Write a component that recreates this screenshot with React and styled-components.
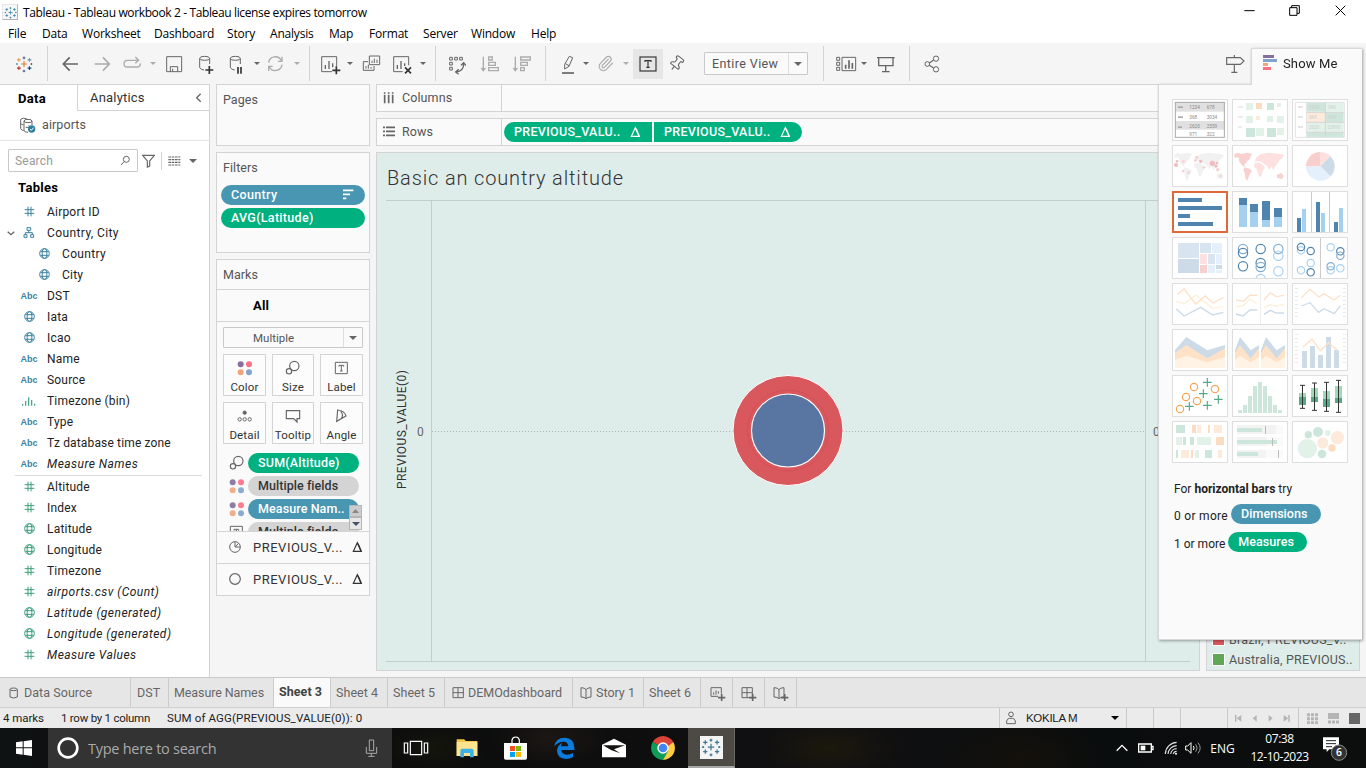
import React from "react";
import styled, { createGlobalStyle, css } from "styled-components";
import { Paperclip, Pin } from "lucide-react";

const GlobalStyle = createGlobalStyle`
  * { box-sizing: border-box; }
  html, body { margin: 0; padding: 0; overflow: hidden; }
  body { font-family: Roboto, "Liberation Sans", sans-serif; font-size: 12px; color: #222; }
  svg { display: block; flex: none; }
`;

const INK = "#666";
const BLUE = "#4996b2";
const GREEN = "#00b180";
const LINE = "#d4d4d4";

const Screen = styled.div`
  position: relative;
  width: 1366px;
  height: 768px;
  display: flex;
  flex-direction: column;
  overflow: hidden;
  background: #f5f5f5;
  white-space: nowrap;
`;

/* Drawings use three units for every pixel. */
const Pic = ({ w, h, children, ...rest }) => (
  <svg width={w} height={h} viewBox={`0 0 ${w * 3} ${h * 3}`} fill="none" {...rest}>{children}</svg>
);

/* ---------- window frame ---------- */
const TitleBar = styled.div`
  height: 24px;
  display: flex;
  align-items: center;
  padding: 0 3px 0 2px;
  background: #fff;
  color: #000;
  font: 12px "Open Sans", sans-serif;
  letter-spacing: -0.37px;
`;
const AppBadge = styled.div`
  width: 16px;
  height: 16px;
  display: flex;
  align-items: center;
  justify-content: center;
  background: #f6f6f6;
  border: 1px solid #e6e6e6;
  border-right-color: #b5b5b5;
  border-bottom-color: #b5b5b5;
`;
const TitleText = styled.div`
  flex: 1;
  padding-left: 5px;
`;
const WindowButton = styled.div`
  width: 45.5px;
  display: flex;
  justify-content: center;
  padding-bottom: 4px;
`;
const MenuBar = styled.div`
  height: 19px;
  display: flex;
  align-items: center;
  background: #fff;
  color: #000;
  font: 12px "Open Sans", sans-serif;
  letter-spacing: -0.2px;
`;
const MenuItem = styled.div`
  width: ${(p) => p.$w}px;
  padding-left: 8px;
`;

/* ---------- toolbar ---------- */
const Toolbar = styled.div`
  height: 41px;
  display: flex;
  align-items: center;
  background: #f5f5f5;
`;
const Tool = styled.div`
  width: ${(p) => p.$w}px;
  height: ${(p) => p.$h || 24}px;
  margin-left: ${(p) => p.$gap}px;
  display: flex;
  align-items: center;
  justify-content: center;
  flex: none;
  opacity: ${(p) => (p.$off ? 0.5 : 1)};
  background: ${(p) => (p.$on ? "#e6e6e6" : "transparent")};
`;
const Divider = styled.div`
  width: 1px;
  height: 35px;
  margin-left: ${(p) => p.$gap}px;
  background: ${LINE};
`;
const Combo = styled.div`
  width: ${(p) => p.$w}px;
  height: ${(p) => p.$h}px;
  margin-left: ${(p) => p.$gap || 0}px;
  display: flex;
  align-items: center;
  background: #fafafa;
  border: 1px solid #c9c9c9;
  border-radius: 1px;
  color: #555;
`;
const ComboText = styled.div`
  flex: 1;
  padding-left: ${(p) => p.$pad}px;
  font-size: ${(p) => p.$size}px;
  letter-spacing: ${(p) => p.$ls}px;
`;
const ComboArrow = styled.div`
  width: 19px;
  height: 100%;
  display: flex;
  align-items: center;
  justify-content: center;
  border-left: 1px solid #dedede;
`;
const Triangle = styled.div`
  width: 0;
  height: 0;
  border: ${(p) => p.$s || 4}px solid transparent;
  border-top-color: ${(p) => p.$c || INK};
  border-bottom: 0;
`;

const Caret = ({ gap, off }) => <Tool $w={6} $gap={gap} $off={off}><Triangle $s={3} /></Tool>;
const Icon = ({ w, gap, off, children }) => (
  <Tool $w={w} $gap={gap} $off={off}>
    <Pic w={w} h={24} stroke={INK} strokeWidth="3">{children}</Pic>
  </Tool>
);
const Cylinder = ({ x }) => (
  <>
    <ellipse cx={x} cy="19" rx="15" ry="6" />
    <path d={`M${x - 15} 19V47q4 6 13 7M${x + 15} 19V36`} />
  </>
);
const plusPath = (x, y, r) => `M${x - r} ${y}H${x + r}M${x} ${y - r}V${y + r}`;

const LOGO = [
  [25, 34, 9, "#e8762c"], [9, 21, 6, "#e8a15b"], [42, 21, 6, "#7199a6"],
  [9, 47, 6, "#c0392b"], [42, 47, 6, "#1f457e"], [25, 15, 4, "#5b6591"],
  [25, 56, 4, "#5b6591"], [3, 34, 3, "#5c9bb5"], [48, 34, 3, "#5b6591"],
];
const ProductMark = ({ size, tint }) => (
  <svg width={size} height={size} viewBox="-2 6 54 56" fill="none" strokeWidth="3.5">
    {LOGO.map(([x, y, r, c]) => <path key={`${x}-${y}`} d={plusPath(x, y, r)} stroke={tint || c} />)}
  </svg>
);

const TiltedPin = styled(Pin)`
  transform: rotate(38deg);
`;

const MainToolbar = () => (
  <Toolbar>
    <Tool $w={18} $gap={15}><ProductMark size={18} /></Tool>
    <Divider $gap={14} />
    <Icon w={18} gap={13}><path d="M7 36H51M26 16L7 36L26 56" strokeWidth="5" /></Icon>
    <Icon w={18} gap={14} off><path d="M5 36H49M30 16L49 36L30 56" strokeWidth="5" /></Icon>
    <Icon w={20} gap={11} off><path d="M50 25H16a10 10 0 0 0 0 20H48q8-2 7-11M40 15l10 10l-10 9" strokeWidth="4" /></Icon>
    <Caret gap={8} off />
    <Icon w={18} gap={9}><path d="M5 14H50V59H5ZM16 59V44H38V59M23 50V58" /></Icon>
    <Icon w={16} gap={15}><Cylinder x={20} /><path d={plusPath(34, 54, 12)} stroke="#333" strokeWidth="5" /></Icon>
    <Icon w={15} gap={15}><Cylinder x={19} /><path d="M27 45V65M36 45V65" stroke="#333" strokeWidth="5" /></Icon>
    <Caret gap={10} />
    <Icon w={19} gap={6} off><path d="M8 32A20 20 0 0 1 46 26M48 38A20 20 0 0 1 10 44M48 14V28H36M8 57V43H20" strokeWidth="4" /></Icon>
    <Caret gap={9} off />
    <Divider $gap={9} />
    <Icon w={21} gap={10}>
      <path d="M36 59H5V14H50V42" /><path d="M16 39V51M27 27V51M38 34V46" strokeWidth="4" />
      <path d={plusPath(49, 55, 12)} stroke="#333" strokeWidth="5" />
    </Icon>
    <Caret gap={6} />
    <Icon w={19} gap={9}><path d="M22 12H53V38H22ZM18 29H4V55H36V42M30 26V33M37 20V33M45 23V33M12 42V50M19 38V50M27 45V50" /></Icon>
    <Icon w={21} gap={11}>
      <path d="M32 59H5V14H50V40" /><path d="M16 39V51M27 27V51M38 34V42" strokeWidth="4" />
      <path d="M39 46L57 64M57 46L39 64" stroke="#333" strokeWidth="5" />
    </Icon>
    <Caret gap={7} />
    <Divider $gap={9} />
    <Icon w={18} gap={12}>
      <path d="M5 16h8v8h-8zM20 16h8v8h-8zM35 16h8v8h-8zM5 31h8v8h-8zM5 46h8v8h-8z" />
      <path d="M47 34Q48 57 24 60M39 40l8-8l7 9M32 52l-9 8l9 7" strokeWidth="4" />
    </Icon>
    <Icon w={20} gap={14} off><path d="M10 14V56M4 48l6 8l6-8M26 15h11v9h-11zM26 31h20v9h-20zM26 47h29v9h-29z" strokeWidth="4" /></Icon>
    <Icon w={20} gap={12} off><path d="M10 14V56M4 48l6 8l6-8M26 15h29v9h-29zM26 31h20v9h-20zM26 47h11v9h-11z" strokeWidth="4" /></Icon>
    <Divider $gap={13} />
    <Icon w={15} gap={15}><path d="M25 13L35 17L24 43L11 51L11 37ZM13 35L24 41" /><path d="M3 63H39" strokeWidth="5" /></Icon>
    <Caret gap={7} />
    <Tool $w={15} $gap={9} $off><Paperclip size={17} color={INK} strokeWidth={1.6} /></Tool>
    <Caret gap={10} off />
    <Tool $w={30} $h={30} $gap={4} $on>
      <Pic w={18} h={16}>
        <rect x="3" y="3" width="48" height="42" stroke="#333" strokeWidth="3.5" />
        <path d="M18 18V14H36V18M27 14V34M22 34H32" stroke="#333" strokeWidth="3.5" />
      </Pic>
    </Tool>
    <Tool $w={15} $gap={6}><TiltedPin size={17} color={INK} strokeWidth={1.6} /></Tool>
    <Combo $w={104} $h={23} $gap={20}>
      <ComboText $pad={7} $size={12.5} $ls={0.4}>Entire View</ComboText>
      <ComboArrow><Triangle /></ComboArrow>
    </Combo>
    <Divider $gap={15} />
    <Icon w={22} gap={11}>
      <path d="M5 16h9v9h-9zM5 31h9v9h-9zM5 46h9v9h-9zM21 16H62V56H21Z" />
      <path d="M32 38V50M42 25V50M52 33V50" strokeWidth="5" />
    </Icon>
    <Caret gap={4} />
    <Icon w={20} gap={9}><path d="M3 17H56M8 17V41H51V17M29 41V59M18 59H41" strokeWidth="4" /></Icon>
    <Divider $gap={13} />
    <Icon w={16} gap={14}><circle cx="10" cy="36" r="7" /><circle cx="36" cy="20" r="8" /><circle cx="36" cy="52" r="8" /><path d="M16 33L29 24M16 40L29 48" strokeWidth="3.5" /></Icon>
    <Icon w={20} gap={285}><path d="M5 17H46L57 27L46 37H5ZM28 9V17M28 37V61M19 61H37" strokeWidth="3.5" /></Icon>
  </Toolbar>
);

/* ---------- data pane ---------- */
const Body = styled.div`
  height: 593px;
  display: flex;
`;
const DataPane = styled.div`
  width: 210px;
  background: #fff;
  border-right: 1px solid ${LINE};
  border-top: 1px solid ${LINE};
`;
const PaneTabs = styled.div`
  display: flex;
  height: 26px;
`;
const PaneTab = styled.div`
  width: ${(p) => p.$w}px;
  padding-left: ${(p) => p.$pad}px;
  display: flex;
  align-items: center;
  font-size: 13px;
  letter-spacing: ${(p) => (p.$active ? 0.3 : 0.2)}px;
  font-weight: ${(p) => (p.$active ? 700 : 400)};
  color: ${(p) => (p.$active ? "#000" : "#333")};
  ${(p) => !p.$active && css`
    border-left: 1px solid ${LINE};
    border-bottom: 1px solid ${LINE};
    justify-content: space-between;
    padding-right: 7px;
  `}
`;
const Source = styled.div`
  height: 30px;
  display: flex;
  align-items: center;
  gap: 5px;
  padding: 0 0 2px 19px;
  color: #555;
  font-size: 12.5px;
  letter-spacing: 0.1px;
  border-bottom: 1px solid #e6e6e6;
`;
const SearchRow = styled.div`
  display: flex;
  align-items: center;
  padding: 8px 0 0 8px;
`;
const SearchBox = styled.div`
  width: 130px;
  height: 23px;
  display: flex;
  align-items: center;
  justify-content: space-between;
  padding: 0 6px;
  border: 1px solid #c9c9c9;
  border-radius: 1px;
  color: #999;
  letter-spacing: 0.2px;
`;
const SearchTools = styled.div`
  height: 18px;
  display: flex;
  align-items: center;
  margin-left: ${(p) => p.$gap}px;
  padding-left: ${(p) => p.$pad || 0}px;
  gap: 8px;
  border-left: ${(p) => (p.$pad ? `1px solid ${LINE}` : "0")};
`;
const TablesHeading = styled.div`
  height: 29px;
  padding: 8px 0 0 18px;
  font-size: 13px;
  letter-spacing: 0.3px;
  font-weight: 700;
  color: #000;
`;
const Field = styled.div`
  height: 21px;
  display: flex;
  align-items: center;
  padding-left: ${(p) => 18 + (p.$deep ? 15 : 0) - (p.$open ? 12 : 0)}px;
  letter-spacing: ${(p) => p.$ls || 0.1}px;
  font-size: 12px;
  font-style: ${(p) => (p.$italic ? "italic" : "normal")};
`;
const FieldIcon = styled.span`
  width: 21px;
  margin-right: 8px;
  padding-left: 1px;
  display: flex;
  justify-content: center;
  font: 700 9px "Liberation Sans", sans-serif;
  letter-spacing: 0;
  color: #3d83a0;
  flex: none;
`;
const Expander = styled.span`
  width: 12px;
  display: flex;
`;
const FieldRule = styled.div`
  height: 1px;
  margin: 1px 7px 0 15px;
  background: #dcdcdc;
`;

const Glyph = ({ kind, color }) => {
  if (kind === "abc") return "Abc";
  if (kind === "hash") return <Pic w={11} h={11} stroke={color} strokeWidth="3"><path d="M12 2V31M21 2V31M2 11H31M2 22H31" /></Pic>;
  if (kind === "globe") return (
    <Pic w={11} h={11} stroke={color} strokeWidth="3"><circle cx="16.5" cy="16.5" r="14.5" /><ellipse cx="16.5" cy="16.5" rx="7" ry="14.5" /><path d="M4 11H29M4 22H29" /></Pic>
  );
  if (kind === "tree") return <Pic w={12} h={11} stroke={color} strokeWidth="3"><path d="M12 2h11v8h-11zM17 10V17M7 23V17H28V23M3 23h9v8h-9zM23 23h9v8h-9z" /></Pic>;
  return <Pic w={14} h={10} stroke={color} strokeWidth="3.5"><path d="M2 24V29M11 15V29M20 4V29M29 12V29M38 23V29" /></Pic>;
};

const DIM = "#3d83a0";
const MEA = "#3a9f79";
const DIMENSIONS = [
  { k: "hash", t: "Airport ID" },
  { k: "tree", t: "Country, City", open: true, ls: 0.4 },
  { k: "globe", t: "Country", deep: true, ls: 0.35 },
  { k: "globe", t: "City", deep: true },
  { k: "abc", t: "DST" },
  { k: "globe", t: "Iata" },
  { k: "globe", t: "Icao" },
  { k: "abc", t: "Name" },
  { k: "abc", t: "Source" },
  { k: "hist", t: "Timezone (bin)", c: MEA },
  { k: "abc", t: "Type" },
  { k: "abc", t: "Tz database time zone", ls: 0.15 },
  { k: "abc", t: "Measure Names", i: true },
];
const MEASURES = [
  { k: "hash", t: "Altitude" },
  { k: "hash", t: "Index" },
  { k: "globe", t: "Latitude" },
  { k: "globe", t: "Longitude" },
  { k: "hash", t: "Timezone" },
  { k: "hash", t: "airports.csv (Count)", i: true },
  { k: "globe", t: "Latitude (generated)", i: true },
  { k: "globe", t: "Longitude (generated)", i: true },
  { k: "hash", t: "Measure Values", i: true },
];
const FieldRow = ({ f, color }) => (
  <Field $deep={f.deep} $open={f.open} $italic={f.i} $ls={f.ls || (f.i ? 0.47 : 0.2)}>
    {f.open && <Expander><Pic w={10} h={8} stroke={INK} strokeWidth="4"><path d="M5 8L15 17L25 8" /></Pic></Expander>}
    <FieldIcon><Glyph kind={f.k} color={f.c || color} /></FieldIcon>
    {f.t}
  </Field>
);

const DataSidebar = () => (
  <DataPane>
    <PaneTabs>
      <PaneTab $w={77} $pad={18} $active>Data</PaneTab>
      <PaneTab $w={132} $pad={12}>Analytics<Pic w={7} h={12} stroke={INK} strokeWidth="4"><path d="M17 5L5 17L17 29" /></Pic></PaneTab>
    </PaneTabs>
    <Source>
      <Pic w={18} h={18} stroke={INK} strokeWidth="3">
        <path d="M24 9Q12 3 5 10V38q3 5 9 6M5 22q3 4 8 5" />
        <ellipse cx="27" cy="15" rx="12" ry="5" /><path d="M15 15V44q4 5 12 5M39 15V27M20 34h14m-5-6l6 6l-6 6" />
        <circle cx="38" cy="39" r="11" fill="#2f7f9f" stroke="none" /><path d="M33 39l4 4l7-8" stroke="#fff" />
      </Pic>
      airports
    </Source>
    <SearchRow>
      <SearchBox>Search<Pic w={11} h={11} stroke={INK} strokeWidth="3"><circle cx="19" cy="13" r="9" /><path d="M12 20L3 30" /></Pic></SearchBox>
      <SearchTools $gap={4}><Pic w={13} h={14} stroke={INK} strokeWidth="3.5"><path d="M2 4H37L23 21V36L16 39V21Z" /></Pic></SearchTools>
      <SearchTools $gap={6} $pad={6}>
        <Pic w={13} h={10} stroke={INK} strokeWidth="3.5"><path d="M1 3H37M1 11H37M1 19H37M1 27H37" strokeDasharray="8 2" /></Pic>
        <Triangle />
      </SearchTools>
    </SearchRow>
    <TablesHeading>Tables</TablesHeading>
    {DIMENSIONS.map((f) => <FieldRow key={f.t} f={f} color={DIM} />)}
    <FieldRule />
    {MEASURES.map((f) => <FieldRow key={f.t} f={f} color={MEA} />)}
  </DataPane>
);

/* ---------- cards ---------- */
const CardColumn = styled.div`
  width: 154px;
  margin-left: 6px;
  display: flex;
  flex-direction: column;
  gap: 6px;
`;
const Card = styled.div`
  height: ${(p) => p.$h}px;
  border: 1px solid ${LINE};
  background: #fafafa;
`;
const CardTitle = styled.div`
  height: ${(p) => p.$h}px;
  padding: 0 0 ${(p) => p.$lift || 0}px 6px;
  display: flex;
  align-items: center;
  color: #555;
  letter-spacing: 0.05px;
  font-size: 12.5px;
`;
const Pill = styled.div`
  width: ${(p) => p.$w}px;
  height: 20px;
  display: flex;
  align-items: center;
  justify-content: space-between;
  padding: 0 11px 1px 10px;
  border-radius: ${(p) => p.$radius || "10px"};
  background: ${(p) => p.$bg};
  color: ${(p) => p.$fg || "#fff"};
  font-size: 12.5px;
  font-weight: 500;
  letter-spacing: ${(p) => p.$ls || 0.2}px;
`;
const PillStack = styled.div`
  display: flex;
  flex-direction: column;
  gap: 3px;
  padding-left: 4px;
`;
const MarkTab = styled.div`
  height: ${(p) => p.$h}px;
  display: flex;
  align-items: center;
  padding-left: ${(p) => p.$pad}px;
  padding-right: 6px;
  padding-bottom: 1px;
  border-top: 1px solid ${LINE};
  color: ${(p) => (p.$strong ? "#000" : "#333")};
  font-weight: ${(p) => (p.$strong ? 700 : 400)};
  font-size: 13px;
  letter-spacing: ${(p) => (p.$strong ? 0.2 : 0.5)}px;
`;
const MarkName = styled.span`
  flex: 1;
  padding-left: 12px;
`;
const MarkBody = styled.div`
  height: 210px;
  border-top: 1px solid ${LINE};
  padding: 5px 6px 0;
  overflow: hidden;
  position: relative;
`;
const MarkGrid = styled.div`
  display: grid;
  grid-template-columns: 43px 42px 43px;
  gap: 6px;
  margin-top: 6px;
`;
const MarkButton = styled.div`
  height: 42px;
  border: 1px solid ${LINE};
  background: #fcfcfc;
  display: flex;
  flex-direction: column;
  align-items: center;
  padding-top: 5px;
  gap: 4px;
  color: #333;
  font-size: 11.5px;
  letter-spacing: 0.15px;
`;
const MarkPills = styled.div`
  display: flex;
  flex-direction: column;
  gap: 3px;
  margin-top: 9px;
`;
const MarkPillRow = styled.div`
  display: flex;
  align-items: center;
  gap: 3px;
  padding-left: 6px;
`;
const Scroller = styled.div`
  position: absolute;
  right: 7px;
  bottom: 1px;
  width: 13px;
  display: flex;
  flex-direction: column;
`;
const ScrollButton = styled.div`
  height: ${(p) => (p.$off ? 12 : 13)}px;
  display: flex;
  align-items: center;
  justify-content: center;
  border: 1px solid #b5b5b5;
  background: ${(p) => (p.$off ? "#ccc" : "#e6e6e6")};
`;

const Dots = ({ faded }) => (
  <Pic w={16} h={16} opacity={faded ? 0.9 : 1}>
    <circle cx="11" cy="13" r="9" fill="#85709e" /><circle cx="36" cy="13" r="9" fill="#fb7084" />
    <circle cx="11" cy="37" r="9" fill="#f2a57c" /><circle cx="36" cy="37" r="9" fill="#80a4cc" />
  </Pic>
);
const Bubbles = () => <Pic w={16} h={16} stroke={INK} strokeWidth="3.5"><circle cx="28" cy="18" r="14" /><circle cx="12" cy="34" r="8" fill="#fafafa" /></Pic>;
const LabelBox = () => <Pic w={16} h={16} stroke={INK} strokeWidth="3"><path d="M4 7H40V41H4ZM15 20V16H29V20M22 16V33M18 33H26" /></Pic>;
const Delta = ({ c = "#fff" }) => <Pic w={11} h={12} stroke={c} strokeWidth="3.5"><path d="M16 5L28 31H4Z" /><path d="M18 8L27 30" strokeWidth="4.5" /></Pic>;

const MARKS = [
  ["Color", <Dots key="c" />],
  ["Size", <Bubbles key="s" />],
  ["Label", <LabelBox key="l" />],
  ["Detail", <Pic key="d" w={16} h={16} stroke={INK} strokeWidth="3"><circle cx="23" cy="14" r="5" fill={INK} /><circle cx="8" cy="34" r="5" /><circle cx="23" cy="34" r="5" /><circle cx="38" cy="34" r="5" /></Pic>],
  ["Tooltip", <Pic key="t" w={16} h={16} stroke={INK} strokeWidth="3.5"><path d="M4 8H44V32H36V42L26 32H4Z" /></Pic>],
  ["Angle", <Pic key="a" w={16} h={16} stroke={INK} strokeWidth="3.5"><path d="M11 6L8 40L36 24Q32 8 11 6ZM20 10Q30 20 22 32" /></Pic>],
];

const Cards = () => (
  <CardColumn>
    <Card $h={62}><CardTitle $h={30} $lift={2}>Pages</CardTitle></Card>
    <Card $h={101}>
      <CardTitle $h={32} $lift={3}>Filters</CardTitle>
      <PillStack>
        <Pill $w={144} $bg={BLUE} $ls={0.35}>Country<Pic w={11} h={11} stroke="#fff" strokeWidth="5"><path d="M0 4H31M0 16H21M0 28H10" /></Pic></Pill>
        <Pill $w={144} $bg={GREEN} $ls={0.3}>AVG(Latitude)</Pill>
      </PillStack>
    </Card>
    <Card $h={337}>
      <CardTitle $h={29}>Marks</CardTitle>
      <MarkTab $h={32} $pad={36} $strong>All</MarkTab>
      <MarkBody>
        <Combo $w={140} $h={21}>
          <ComboText $pad={29} $size={11.5} $ls={0}>Multiple</ComboText>
          <ComboArrow><Triangle /></ComboArrow>
        </Combo>
        <MarkGrid>
          {MARKS.map(([name, icon]) => <MarkButton key={name}>{icon}{name}</MarkButton>)}
        </MarkGrid>
        <MarkPills>
          <MarkPillRow><Bubbles /><Pill $w={111} $bg={GREEN}>SUM(Altitude)</Pill></MarkPillRow>
          <MarkPillRow><Dots faded /><Pill $w={111} $bg="#d4d4d4" $fg="#333" $ls={0.05}>Multiple fields</Pill></MarkPillRow>
          <MarkPillRow><Dots faded /><Pill $w={111} $bg={BLUE} $ls={0.1}>Measure Nam..</Pill></MarkPillRow>
          <MarkPillRow><LabelBox /><Pill $w={111} $bg="#d4d4d4" $fg="#333" $ls={0.05}>Multiple fields</Pill></MarkPillRow>
        </MarkPills>
        <Scroller>
          <ScrollButton $off><Pic w={7} h={4}><path d="M10.500 0L21 12H0Z" fill="#888" /></Pic></ScrollButton>
          <ScrollButton><Triangle $c="#445066" /></ScrollButton>
        </Scroller>
      </MarkBody>
      <MarkTab $h={32} $pad={12}>
        <Pic w={12} h={12} stroke={INK} strokeWidth="3"><circle cx="18" cy="18" r="16" /><path d="M18 3V18H33M18 18L29 7" /></Pic>
        <MarkName>PREVIOUS_V...</MarkName><Delta c="#333" />
      </MarkTab>
      <MarkTab $h={32} $pad={12}>
        <Pic w={12} h={12} stroke={INK} strokeWidth="3.5"><circle cx="18" cy="18" r="16" /></Pic>
        <MarkName>PREVIOUS_V...</MarkName><Delta c="#333" />
      </MarkTab>
    </Card>
  </CardColumn>
);

/* ---------- worksheet ---------- */
const Work = styled.div`
  width: 824px;
  margin-left: 6px;
  display: flex;
  flex-direction: column;
  gap: 6px;
`;
const Shelf = styled.div`
  height: 28px;
  display: flex;
  align-items: center;
  border: 1px solid ${LINE};
  background: #fafafa;
`;
const ShelfName = styled.div`
  width: 125px;
  height: 100%;
  display: flex;
  align-items: center;
  gap: 7px;
  padding: 0 0 1px 6px;
  border-right: 1px solid ${LINE};
  color: #555;
  font-size: 12.5px;
  letter-spacing: 0.1px;
`;
const ShelfPills = styled.div`
  display: flex;
  gap: 2px;
  padding-left: 2px;
`;
const View = styled.div`
  height: 519px;
  background: #dfedea;
  border: 1px solid ${LINE};
`;
const ViewTitle = styled.div`
  height: 48px;
  margin: 0 9px;
  padding: 13px 0 0 1px;
  border-bottom: 1px solid #c3cdcb;
  font-size: 20px;
  font-weight: 300;
  letter-spacing: 0.85px;
  color: #333;
`;
const LegendColumn = styled.div`
  width: 154px;
  margin-left: 6px;
  padding-bottom: 6px;
  display: flex;
  flex-direction: column;
  justify-content: flex-end;
`;
const Legend = styled.div`
  height: 120px;
  padding: 0 0 1px 5px;
  display: flex;
  flex-direction: column;
  justify-content: flex-end;
  background: #dfedea;
  border: 1px solid ${LINE};
`;
const LegendItem = styled.div`
  height: 20px;
  display: flex;
  align-items: center;
  gap: 4px;
  color: #555;
  letter-spacing: 0.2px;
  font-size: 12.5px;
`;
const Swatch = styled.span`
  width: 13px;
  height: 13px;
  border: 1px solid #fff;
  background: ${(p) => p.$c};
`;

const Chart = () => (
  <svg width="822" height="468" viewBox="377 201 822 468">
    <g stroke="#c3cdcb" fill="none">
      <path d="M431.500 201V661M1145.500 201V661M386 661.500H1190" />
      <path d="M432 431.500H1145" stroke="#a9b5b3" strokeDasharray="1 2" />
    </g>
    <circle cx="788" cy="430.500" r="55" fill="#d9585d" stroke="#fff" />
    <circle cx="788" cy="430.500" r="40.500" fill="none" stroke="#d35156" strokeWidth="1" />
    <circle cx="788" cy="430.500" r="36.500" fill="#5876a1" stroke="#fff" strokeWidth="1.2" />
    <g fontFamily="Roboto, sans-serif" fontSize="12" fill="#666">
      <text x="417" y="436">0</text>
      <text x="1153" y="436">0</text>
      <text transform="translate(406 489) rotate(-90)" fill="#333" textLength="119">PREVIOUS_VALUE(0)</text>
    </g>
  </svg>
);

const Worksheet = () => (
  <>
    <Work>
      <Shelf><ShelfName><Pic w={12} h={12} stroke={INK} strokeWidth="5"><path d="M5 1V5M17 1V5M29 1V5M5 8V34M17 8V34M29 8V34" /></Pic>Columns</ShelfName></Shelf>
      <Shelf>
        <ShelfName><Pic w={12} h={11} stroke={INK} strokeWidth="5"><path d="M0 4H6M9 4H36M0 16H6M9 16H36M0 28H6M9 28H36" /></Pic>Rows</ShelfName>
        <ShelfPills>
          <Pill $w={148} $bg={GREEN} $ls={0.3} $radius="10px 0 0 10px">PREVIOUS_VALU..<Delta /></Pill>
          <Pill $w={148} $bg={GREEN} $ls={0.3} $radius="0 10px 10px 0">PREVIOUS_VALU..<Delta /></Pill>
        </ShelfPills>
      </Shelf>
      <View>
        <ViewTitle>Basic an country altitude</ViewTitle>
        <Chart />
      </View>
    </Work>
    <LegendColumn>
      <Legend>
        <LegendItem><Swatch $c="#d9585d" />Brazil, PREVIOUS_V..</LegendItem>
        <LegendItem><Swatch $c="#60a755" />Australia, PREVIOUS..</LegendItem>
      </Legend>
    </LegendColumn>
  </>
);

/* ---------- Show Me ---------- */
const ShowMe = styled.div`
  position: absolute;
  left: 1158px;
  top: 48px;
  width: 204px;
  filter: drop-shadow(1px 1px 1.5px rgba(0, 0, 0, 0.35));
`;
const ShowMeTab = styled.div`
  position: relative;
  height: 37px;
  width: 111px;
  margin: 0 0 -1px auto;
  display: flex;
  align-items: center;
  gap: 5px;
  padding: 0 0 8px 11px;
  background: #fafafa;
  border: 1px solid #d9d9d9;
  border-bottom: 0;
  border-right: 0;
  color: #222;
  font-size: 13px;
  letter-spacing: 0.15px;
`;
const ShowMeBody = styled.div`
  height: 556px;
  padding: 14px 13px;
  background: #fafafa;
  border: 1px solid #d9d9d9;
  border-right: 0;
`;
const ThumbGrid = styled.div`
  display: grid;
  grid-template-columns: repeat(3, 56px);
  gap: 4px;
`;
const Thumb = styled.div`
  width: 56px;
  height: 42px;
  background: #fff;
  outline: ${(p) => (p.$on ? "2px solid #dc6a38" : "1px solid #dedede")};
  outline-offset: ${(p) => (p.$on ? -2 : -1)}px;
`;
const HintTitle = styled.div`
  height: 26px;
  margin-top: 13px;
  padding-left: 2px;
  display: flex;
  align-items: center;
`;
const Hint = styled.div`
  display: flex;
  align-items: center;
  gap: 3px;
  height: 28px;
  padding-left: 2px;
  letter-spacing: ${(p) => p.$ls}px;
  color: #222;
`;
const HintPill = styled.span`
  width: ${(p) => p.$w}px;
  height: 20px;
  margin-bottom: 4px;
  border-radius: 10px;
  background: ${(p) => p.$bg};
  color: #fff;
  display: flex;
  align-items: center;
  padding: 0 0 1px 10px;
  font-size: 12.5px;
  letter-spacing: 0.05px;
  font-weight: 500;
`;

const Rects = ({ list }) => list.map(([x, y, w, h, f], i) => <rect key={i} x={x} y={y} width={w} height={h} fill={f} />);
const Rings = ({ list, r }) => list.map(([x, y, c], i) => <circle key={i} cx={x} cy={y} r={r} stroke={c} strokeWidth="3.5" />);
const Lines = ({ list }) => list.map(([pts, c], i) => <polyline key={i} points={pts} stroke={c} strokeWidth="4" />);
const Continents = ({ a, b }) => (
  <g>
    <path fill={a} d="M7 27L18 24L28 27L44 23L60 26L57 34L52 36L56 40L46 48L40 57L36 58L41 68L30 61L22 50L20 37L7 38ZM38 67L52 71L60 78L52 90L46 107L41 101L38 84L34 74ZM134 90L148 84L155 93L150 102L136 99Z" />
    <path fill={b} d="M68 54L84 53L94 62L99 68L92 78L88 92L82 96L78 84L74 72L66 66ZM68 50L72 38L84 28L108 23L140 26L157 30L150 40L143 44L136 57L128 66L124 77L118 63L112 75L105 62L97 58L90 52L80 48Z" />
  </g>
);
const dk = "#4e84ae", lt = "#a6d0f0", md = "#7fadd3";
const g1 = "#e2f2e9", g2 = "#cde6db", o1 = "#fdeadb", o2 = "#fbdcc0";
const fo = "#fde2c8", fy = "#fdf0d8", fb = "#cddbe8";
const area = (pts, dx) => `M${pts.map(([x, y]) => `${x + dx} ${y}`).join("L")}L${pts[pts.length - 1][0] + dx} 117L${pts[0][0] + dx} 117Z`;
const HALF = [[[9, 63], [24, 24], [56, 64], [81, 48]], [[9, 72], [24, 48], [56, 88], [81, 58]], [[9, 93], [24, 80], [56, 100], [81, 84]]];

const THUMBS = [
  <>
    <Rects list={[[9, 10, 150, 28, "#e0e0e0"], [9, 66, 150, 26, "#e0e0e0"], [18, 22, 15, 5, "#aaa"], [18, 52, 15, 5, "#aaa"], [18, 82, 12, 5, "#aaa"]]} />
    <rect x="10" y="10" width="147" height="105" stroke="#a9a9a9" strokeWidth="3" />
    <g fill="#888" fontSize="14"><text x="52" y="31">1234</text><text x="104" y="31">678</text><text x="52" y="59">368</text><text x="104" y="59">3034</text><text x="52" y="86">2620</text><text x="104" y="86">2559</text><text x="52" y="110">971</text><text x="104" y="110">322</text></g>
  </>,
  <Rects list={[[18, 21, 15, 6, "#ececec"], [18, 51, 15, 6, "#ececec"], [18, 81, 12, 6, "#ececec"], [42, 12, 21, 21, g1], [72, 12, 18, 18, o2], [105, 12, 21, 21, g2], [135, 12, 12, 12, g1], [42, 51, 21, 21, g1], [72, 51, 12, 12, o1], [105, 51, 18, 18, g1], [135, 51, 21, 21, g1], [42, 87, 27, 27, g2], [72, 87, 24, 24, g1], [105, 87, 27, 27, g2], [135, 87, 21, 21, g1]]} />,
  <>
    <Rects list={[[18, 21, 15, 6, "#e6e6e6"], [18, 51, 15, 6, "#e6e6e6"], [18, 81, 15, 6, "#e6e6e6"], [45, 10, 54, 28, g2], [101, 10, 54, 28, g1], [45, 42, 54, 27, o1], [101, 42, 54, 27, g2], [45, 72, 54, 27, g1], [101, 72, 54, 27, g1], [45, 102, 54, 13, g2], [101, 102, 54, 13, g2]]} />
    <path d="M10 10H157V115H10ZM43 10V115" stroke="#e3e3e3" strokeWidth="3" />
    <path d="M43 40H157M43 70H157M43 100H157M100 10V115" stroke="#d2d2d2" strokeWidth="3" />
    <g fill="#cfcfcf" fontSize="14"><text x="50" y="31">1234</text><text x="108" y="31">546</text><text x="50" y="60">368</text><text x="108" y="60">340</text><text x="50" y="90">2620</text><text x="106" y="90">53890</text></g>
  </>,
  <><Continents a="#f1f1f1" b="#f1f1f1" />
    {[[12, 60, 6, "#f0bcc0"], [15, 49, 4, "#f0bcc0"], [34, 49, 5, "#fad8d8"], [74, 37, 5, "#f6cfd0"], [70, 46, 4, "#f6cfd0"], [86, 49, 5, "#f0bcc0"], [121, 55, 8, "#f0bcc0"], [135, 54, 4, "#f0bcc0"], [132, 63, 5, "#f0bcc0"], [137, 74, 5, "#f6cfd0"], [33, 78, 4, "#f6cfd0"], [50, 83, 5, "#fad8d8"], [96, 67, 4, "#f6cfd0"], [146, 93, 4, "#f6cfd0"]].map(([x, y, r, c], i) => <circle key={i} cx={x} cy={y} r={r} fill={c} />)}</>,
  <Continents a="#f8d0ce" b="#fee0e0" />,
  <><path d="M85 64V21A43 43 0 0 1 115.400 33.600Z" fill="#fee0e0" /><path d="M85 64L115.400 33.600A43 43 0 0 1 115.400 94.400Z" fill={fb} /><path d="M85 64L115.400 94.400A43 43 0 0 1 42 64Z" fill="#e4f0fb" /><path d="M85 64H42A43 43 0 0 1 85 21Z" fill="#f7cfcd" /></>,
  <Rects list={[[18, 21, 72, 12, dk], [18, 45, 132, 12, dk], [18, 69, 36, 12, dk], [18, 93, 105, 12, dk]]} />,
  <Rects list={[[21, 21, 24, 21, dk], [21, 42, 24, 66, lt], [54, 39, 24, 24, dk], [54, 63, 24, 45, lt], [90, 30, 24, 57, dk], [90, 87, 24, 21, lt], [126, 51, 24, 27, dk], [126, 78, 24, 30, lt]]} />,
  <Rects list={[[57, 3, 3, 120, "#ccc"], [111, 3, 3, 120, "#ccc"], [15, 81, 12, 42, dk], [30, 54, 12, 69, lt], [72, 33, 12, 90, dk], [87, 66, 12, 57, lt], [126, 93, 12, 30, dk], [141, 51, 12, 72, lt]]} />,
  <Rects list={[[18, 18, 63, 45, "#d8e5f1"], [18, 66, 63, 42, fb], [84, 18, 33, 30, "#d8e5f1"], [120, 18, 30, 30, "#e4f0fb"], [84, 51, 21, 30, "#fee0e0"], [108, 51, 21, 30, "#d8e5f1"], [132, 51, 18, 30, "#e4f0fb"], [84, 84, 21, 24, "#f7cfcd"], [108, 84, 21, 24, "#e4f0fb"], [132, 84, 18, 12, fb], [132, 99, 18, 9, "#e4f0fb"]]} />,
  <Rings r={14} list={[[33, 36, md], [33, 48, dk], [33, 88, dk], [86, 36, dk], [86, 78, dk], [86, 90, md], [86, 126, lt], [139, 56, lt], [139, 36, md], [139, 103, lt]]} />,
  <><Rects list={[[84, 3, 3, 120, "#ccc"]]} /><Rings r={11} list={[[27, 40, lt], [27, 30, dk], [56, 42, dk], [56, 78, lt], [27, 100, lt], [56, 106, dk], [116, 31, lt], [145, 43, dk], [145, 56, md], [116, 100, lt], [116, 88, md], [145, 94, lt]]} /></>,
  <Lines list={[["13,55 36,62 72,36 122,76 154,70", fy], ["16,35 36,17 71,63 100,39 122,60 154,44", fo], ["13,77 36,99 86,73 122,96 154,88", fb]]} />,
  <><Rects list={[[84, 3, 3, 120, "#eee"]]} /><Lines list={[["12,72 33,68 54,48 74,62", fy], ["12,51 35,55 54,36 76,37", fo], ["12,93 33,99 54,81 76,81", fb], ["96,75 115,65 132,70 156,64", fy], ["96,51 115,29 132,41 156,37", fo], ["96,94 115,82 132,90 156,90", fb]]} /></>,
  <><path d="M13 15V108M157 15V108" stroke="#e9e9e9" strokeWidth="9" strokeDasharray="3 9" /><Lines list={[["28,44 54,19 81,42 96,32 126,51 145,37", fo], ["28,69 54,59 80,88 96,77 127,92 145,68", fb]]} /></>,
  <><path d="M9 63L43 24L106 64L159 48V117H9Z" fill={fb} /><path d="M9 72L43 48L106 88L159 58V117H9Z" fill={fo} /><path d="M9 93L43 80L106 100L159 84V117H9Z" fill="#fef3e4" /></>,
  <>{[0, 78].map((dx) => HALF.map((pts, i) => <path key={`${dx}-${i}`} d={area(pts, dx)} fill={[fb, fo, "#fef3e4"][i]} />))}<rect x="81" y="20" width="6" height="98" fill="#fff" /></>,
  <><path d="M13 15V108M157 15V108" stroke="#e9e9e9" strokeWidth="9" strokeDasharray="3 9" /><Rects list={[[30, 66, 15, 51, fb], [54, 51, 15, 66, fb], [78, 78, 15, 39, fb], [102, 24, 15, 93, fb], [126, 63, 15, 54, fb]]} /><Lines list={[["33,54 60,30 85,66 109,41 139,66", fo]]} /></>,
  <><Rings r={11} list={[[66, 36, "#f2a65a"], [129, 42, "#f2a65a"], [42, 66, "#f2a65a"], [75, 78, "#f2a65a"], [24, 102, "#f2a65a"]]} />{[[106, 22], [94, 56], [139, 73], [52, 94], [106, 91]].map(([x, y]) => <path key={`${x}-${y}`} d={plusPath(x, y, 13)} stroke="#55aa88" strokeWidth="3.500" />)}</>,
  <Rects list={[105, 90, 63, 33, 21, 33, 63, 90, 105].map((y, i) => [18 + i * 15, y, 12, 114 - y, g2])} />,
  <>{[[21, 54, 66, 90, 31, 100], [57, 39, 66, 81, 24, 106], [93, 48, 72, 96, 22, 109], [129, 33, 69, 84, 16, 112]].map(([x, a, b, c, t, u]) => <g key={x}><rect x={x} y={a} width="21" height={b - a} fill="#9fd9b8" /><rect x={x} y={b} width="21" height={c - b} fill="#57aa87" /><path d={`M${x + 10.5} ${t}V${u}M${x + 3} ${t}h15M${x + 3} ${u}h15`} stroke="#333" strokeWidth="3" /></g>)}</>,
  <Rects list={[[12, 12, 27, 24, g2], [60, 12, 12, 24, o2], [75, 12, 12, 24, o1], [108, 12, 6, 24, o2], [126, 12, 24, 24, o1], [12, 48, 18, 24, g1], [33, 48, 9, 24, g2], [54, 48, 12, 24, g2], [75, 48, 42, 24, g1], [132, 48, 24, 24, o2], [12, 87, 6, 24, g2], [27, 87, 24, 24, o1], [57, 87, 6, 24, o2], [69, 87, 12, 24, g1], [99, 87, 21, 24, g2], [138, 87, 12, 24, o1]]} />,
  <Rects list={[[15, 12, 138, 27, "#fafafa"], [15, 12, 117, 27, "#f3f3f3"], [15, 48, 138, 27, "#fafafa"], [15, 48, 90, 27, "#f3f3f3"], [15, 87, 138, 24, "#fafafa"], [15, 87, 87, 24, "#f3f3f3"], [15, 21, 75, 12, g2], [15, 57, 120, 12, g2], [15, 93, 63, 12, g2], [99, 15, 3, 24, "#bbb"], [120, 51, 3, 24, "#bbb"], [138, 87, 3, 24, "#bbb"]]} />,
  <>{[[46, 83, 29, g1], [49, 41, 11, g2], [78, 33, 15, g2], [107, 36, 9, g1], [136, 50, 20, o1], [92, 66, 17, o1], [120, 81, 11, o2], [90, 99, 13, g2]].map(([x, y, r, c]) => <circle key={x} cx={x} cy={y} r={r} fill={c} />)}</>,
];

const ShowMePanel = () => (
  <ShowMe>
    <ShowMeTab>
      <Pic w={15} h={16}><Rects list={[[0, 0, 33, 9, "#85709e"], [0, 12, 42, 9, "#80a4cc"], [0, 24, 15, 9, "#f2a57c"], [0, 36, 24, 9, "#fb7084"]]} /></Pic>
      Show Me
    </ShowMeTab>
    <ShowMeBody>
      <ThumbGrid>
        {THUMBS.map((t, i) => <Thumb key={i} $on={i === 6}><Pic w={56} h={42}>{t}</Pic></Thumb>)}
      </ThumbGrid>
      <HintTitle>For&nbsp;<b>horizontal bars</b>&nbsp;try</HintTitle>
      <Hint $ls={0.3}>0 or more<HintPill $w={90} $bg={BLUE}>Dimensions</HintPill></Hint>
      <Hint $ls={0}>1 or more<HintPill $w={79} $bg={GREEN}>Measures</HintPill></Hint>
    </ShowMeBody>
  </ShowMe>
);

/* ---------- sheet tabs and status ---------- */
const SheetTabs = styled.div`
  height: 31px;
  display: flex;
  background: #e6e6e6;
  border-top: 1px solid #c9c9c9;
  border-bottom: 1px solid #d0d0d0;
`;
const SheetTab = styled.div`
  width: ${(p) => p.$w}px;
  display: flex;
  align-items: center;
  gap: 4px;
  padding-left: ${(p) => p.$pad || 5}px;
  padding-bottom: ${(p) => (p.$active ? 2 : 0)}px;
  border-right: 1px solid #cbcbcb;
  background: ${(p) => (p.$active ? "#fafafa" : "transparent")};
  color: ${(p) => (p.$active ? "#444" : "#666")};
  font-weight: ${(p) => (p.$active ? 700 : 400)};
  font-size: 12.5px;
  letter-spacing: ${(p) => p.$ls ?? 0.05}px;
`;
const StatusBar = styled.div`
  height: 20px;
  display: flex;
  align-items: center;
  background: #ebebeb;
  color: #222;
  font-size: 11.5px;
`;
const StatusText = styled.div`
  width: ${(p) => p.$w}px;
  padding-left: 3px;
  letter-spacing: ${(p) => p.$ls || 0}px;
`;
const StatusCell = styled.div`
  width: ${(p) => p.$w}px;
  height: 20px;
  display: flex;
  align-items: center;
  gap: 10px;
  padding-left: ${(p) => p.$pad || 0}px;
  border-left: 1px solid #c9c9c9;
`;
const UserName = styled.span`
  flex: 1;
  font: 11.5px "Liberation Sans", sans-serif;
  letter-spacing: -0.3px;
`;
const UserArrow = styled.span`
  padding-right: 7px;
`;

const GridGlyph = ({ plus }) => <Pic w={plus ? 16 : 12} h={16} stroke={INK} strokeWidth="3"><path d="M3 8H34V38H3ZM18 8V38M3 23H34" />{plus && <path d={plusPath(35, 38, 11)} strokeWidth="5" />}</Pic>;
const BookGlyph = ({ plus }) => <Pic w={plus ? 16 : 12} h={16} stroke={INK} strokeWidth="3"><path d="M3 8Q14 8 18 14Q22 8 33 8V36Q22 36 18 41Q14 36 3 36ZM18 14V41" />{plus && <path d={plusPath(35, 38, 11)} strokeWidth="5" />}</Pic>;

const BottomBars = () => (
  <>
    <SheetTabs>
      <SheetTab $w={131} $pad={9}><Pic w={11} h={12} stroke={INK} strokeWidth="3"><ellipse cx="14" cy="7" rx="11" ry="4" /><path d="M3 7V30Q14 36 25 30V7" /></Pic>Data Source</SheetTab>
      <SheetTab $w={38} $pad={6}>DST</SheetTab>
      <SheetTab $w={105} $ls={-0.1}>Measure Names</SheetTab>
      <SheetTab $w={57} $active>Sheet 3</SheetTab>
      <SheetTab $w={57}>Sheet 4</SheetTab>
      <SheetTab $w={57}>Sheet 5</SheetTab>
      <SheetTab $w={128} $pad={7} $ls={0}><GridGlyph />DEMOdashboard</SheetTab>
      <SheetTab $w={71} $pad={7} $ls={0}><BookGlyph />Story 1</SheetTab>
      <SheetTab $w={57}>Sheet 6</SheetTab>
      <SheetTab $w={32} $pad={9}><Pic w={16} h={16} stroke={INK} strokeWidth="3"><path d="M24 34H3V8H34V26M11 22V29M18 16V29M25 19V26" /><path d={plusPath(35, 38, 11)} strokeWidth="5" /></Pic></SheetTab>
      <SheetTab $w={32} $pad={8}><GridGlyph plus /></SheetTab>
      <SheetTab $w={32} $pad={8}><BookGlyph plus /></SheetTab>
    </SheetTabs>
    <StatusBar>
      <StatusText $w={58} $ls={-0.05}>4 marks</StatusText>
      <StatusText $w={106} $ls={-0.25}>1 row by 1 column</StatusText>
      <StatusText $w={835} $ls={0.13}>SUM of AGG(PREVIOUS_VALUE(0)): 0</StatusText>
      <StatusCell $w={127} $pad={6}>
        <Pic w={10} h={14} stroke={INK} strokeWidth="3"><circle cx="15" cy="10" r="7" /><path d="M2 38V30Q4 23 10 22H20Q26 23 28 30V38Z" /></Pic>
        <UserName>KOKILA M</UserName>
        <UserArrow><Triangle $s={4} $c="#000" /></UserArrow>
      </StatusCell>
      <StatusCell $w={27} /><StatusCell $w={27} /><StatusCell $w={47} />
      <StatusCell $w={71} $pad={7}>
        <Pic w={56} h={10}>
          <path d="M2 6V26" stroke="#b0b0b0" strokeWidth="4" />
          <path d="M19 6V26L5 16ZM65 6V26L53 16ZM101 6V26L113 16ZM146 6V26L160 16Z" fill="#b5b5b5" />
          <path d="M162 6V26" stroke="#b0b0b0" strokeWidth="4" />
        </Pic>
      </StatusCell>
      <StatusCell $w={67} $pad={8}>
        <Pic w={11} h={11}><path d="M0 5H33M0 17H33M0 29H33" stroke="#b5b5b5" strokeWidth="9" strokeDasharray="9 3" /></Pic>
        <Pic w={11} h={11}><path d="M0 9H33" stroke="#b5b5b5" strokeWidth="18" /><path d="M0 27H33" stroke="#b5b5b5" strokeWidth="9" strokeDasharray="9 3" /></Pic>
        <Pic w={11} h={11}><rect width="33" height="33" fill="#666" /></Pic>
      </StatusCell>
    </StatusBar>
  </>
);

/* ---------- taskbar ---------- */
const Taskbar = styled.div`
  height: 40px;
  display: flex;
  align-items: center;
  color: #fff;
  font: 12px "Open Sans", sans-serif;
  background:
    radial-gradient(ellipse 60px 30px at 550px 10px, #1c1714, transparent),
    radial-gradient(ellipse 70px 30px at 830px 20px, #1b180c, transparent),
    radial-gradient(ellipse 80px 40px at 1020px 30px, #14110b, transparent),
    radial-gradient(ellipse 60px 30px at 430px 20px, #14150c, transparent),
    linear-gradient(90deg, #0f1213, #0b0c0c 30%, #111012 60%, #0a0d0d 80%, #0c0e0e);
`;
const TaskCell = styled.div`
  width: ${(p) => p.$w}px;
  height: 40px;
  display: flex;
  align-items: center;
  justify-content: center;
  flex: none;
  ${(p) => p.$active && css`
    background: #4d4a46;
    border-bottom: 2px solid #a6a6a6;
    border-right: 1px solid #6a6864;
  `}
`;
const TaskSearch = styled.div`
  width: 344px;
  height: 40px;
  display: flex;
  align-items: center;
  padding: 0 14px 0 8px;
  background: #333;
  color: #aaa;
  font-size: 14.5px;
`;
const TaskSearchText = styled.span`
  flex: 1;
  padding-left: 8px;
  letter-spacing: -0.27px;
`;
const AppTile = styled.div`
  width: 23px;
  height: 23px;
  display: flex;
  align-items: center;
  justify-content: center;
  background: #f4f4f4;
`;
const Tray = styled.div`
  margin-left: auto;
  display: flex;
  align-items: center;
`;
const Clock = styled.div`
  width: 67px;
  text-align: center;
  line-height: 18px;
  letter-spacing: -0.45px;
`;

const WindowsTaskbar = () => (
  <Taskbar>
    <TaskCell $w={48}><Pic w={16} h={16}><path d="M0 7L20 4V22H0ZM23 3.500L48 0V22H23ZM0 25H20V44L0 41ZM23 25H48V48L23 44.500Z" fill="#fff" /></Pic></TaskCell>
    <TaskSearch>
      <Pic w={24} h={24}><circle cx="36" cy="36" r="28" stroke="#fff" strokeWidth="8" /></Pic>
      <TaskSearchText>Type here to search</TaskSearchText>
      <Pic w={13} h={18} stroke="#aaa" strokeWidth="3"><path d="M13 3H26V35H13ZM4 24V43H35V24M19 43V52M10 52H29" /></Pic>
    </TaskSearch>
    <TaskCell $w={48}><Pic w={26} h={16} stroke="#fff" strokeWidth="3.500"><path d="M22 4H56V44H22ZM4 9H14V39H4ZM64 9H74V39H64Z" /></Pic></TaskCell>
    <TaskCell $w={53}><Pic w={22} h={20}><path d="M2 4H24L30 9H64V54H2Z" fill="#f4c94b" /><path d="M2 12H64V54H2Z" fill="#fde48f" /><path d="M13 58V38Q13 32 19 32H47Q53 32 53 38V58H42V45H24V58Z" fill="#3db1e6" /></Pic></TaskCell>
    <TaskCell $w={45}><Pic w={23} h={24}><path d="M0 21H69V66Q69 71 64 71H5Q0 71 0 66Z" fill="#fff" /><path d="M24 21V12Q26 3 35 3T46 12V21" stroke="#fff" strokeWidth="3.500" /><Rects list={[[18, 30, 15, 15, "#f25022"], [36, 30, 15, 15, "#7fba00"], [18, 48, 15, 15, "#00a4ef"], [36, 48, 15, 15, "#ffb900"]]} /></Pic></TaskCell>
    <TaskCell $w={53}><Pic w={21} h={22}><path fill="#0b7bdc" d="M1 28Q5 2 32 2Q60 3 61 31V39H22Q23 52 39 53Q49 53 57 48V60Q48 66 36 66Q10 64 9 41Q10 24 25 17Q21 22 21 28H43Q42 16 31 14Q12 13 1 28Z" /></Pic></TaskCell>
    <TaskCell $w={46}><Pic w={24} h={20}><path d="M0 20L36 2L72 20V58H0Z" fill="#fff" /><path d="M3 22H69L36 34L54 46L27 36Z" fill="#15130f" /></Pic></TaskCell>
    <TaskCell $w={51}><Pic w={24} h={24}>
      <path d="M36 36L5 18A36 36 0 0 1 67 18Z" fill="#db4437" /><path d="M36 36L5 18A36 36 0 0 0 36 72L54 46Z" fill="#0f9d58" /><path d="M36 36L67 18A36 36 0 0 1 36 72L52 44Z" fill="#ffcd40" /><path d="M36 18H67L52 30Z" fill="#db4437" />
      <circle cx="36" cy="36" r="17" fill="#fff" /><circle cx="36" cy="36" r="13" fill="#4285f4" />
    </Pic></TaskCell>
    <TaskCell $w={47} $active><AppTile><ProductMark size={20} tint="#3f7896" /></AppTile></TaskCell>
    <Tray>
      <TaskCell $w={33}><Pic w={12} h={8} stroke="#fff" strokeWidth="4"><path d="M2 20L18 4L34 20" /></Pic></TaskCell>
      <TaskCell $w={16}><Pic w={16} h={10} stroke="#fff" strokeWidth="4"><path d="M2 3H40V27H2ZM40 10H45V20H40" /><rect x="8" y="8" width="14" height="14" fill="#fff" stroke="none" /></Pic></TaskCell>
      <TaskCell $w={33}><Pic w={14} h={14} stroke="#ddd" strokeWidth="3.500"><path d="M4 39A36 36 0 0 1 38 4M12 39A27 27 0 0 1 38 14M20 39A18 18 0 0 1 38 23M28 39A10 10 0 0 1 38 31" /><circle cx="36" cy="38" r="3" fill="#fff" stroke="none" /></Pic></TaskCell>
      <TaskCell $w={12}><Pic w={17} h={14} stroke="#fff" strokeWidth="3"><path d="M2 15H8L18 5V37L8 27H2ZM25 15Q30 21 25 27" /><path d="M32 10Q41 21 32 32M39 5Q52 21 39 37" stroke="#999" /></Pic></TaskCell>
      <TaskCell $w={47}>ENG</TaskCell>
      <Clock>07:38<br />12-10-2023</Clock>
      <TaskCell $w={44}><Pic w={26} h={25}><path d="M3 4H51V40H22L14 48V40H3Z" fill="#fff" /><path d="M12 14H42M12 23H42M12 32H30" stroke="#222" strokeWidth="3" /><circle cx="51" cy="50" r="23" fill="#333" stroke="#888" strokeWidth="3" /><text x="42" y="61" fontSize="31" fontWeight="600" fill="#fff">6</text></Pic></TaskCell>
      <TaskCell $w={9} />
    </Tray>
  </Taskbar>
);

const MENU = [["File", 34], ["Data", 40], ["Worksheet", 72], ["Dashboard", 73], ["Story", 43], ["Analysis", 59], ["Map", 40], ["Format", 54], ["Server", 48], ["Window", 60], ["Help", 50]];

export default function App() {
  return (
    <>
      <GlobalStyle />
      <Screen>
        <TitleBar>
          <AppBadge><ProductMark size={13} tint="#3f86a8" /></AppBadge>
          <TitleText>Tableau - Tableau workbook 2 - Tableau license expires tomorrow</TitleText>
          <WindowButton><Pic w={11} h={11} stroke="#000" strokeWidth="3"><path d="M1 17H32" /></Pic></WindowButton>
          <WindowButton><Pic w={11} h={11} stroke="#000" strokeWidth="3"><path d="M2 8H24V31H2ZM8 8V2H31V25H24" /></Pic></WindowButton>
          <WindowButton><Pic w={11} h={11} stroke="#000" strokeWidth="3"><path d="M2 2L31 31M31 2L2 31" /></Pic></WindowButton>
        </TitleBar>
        <MenuBar>{MENU.map(([t, w]) => <MenuItem key={t} $w={w}>{t}</MenuItem>)}</MenuBar>
        <MainToolbar />
        <Body>
          <DataSidebar />
          <Cards />
          <Worksheet />
        </Body>
        <BottomBars />
        <WindowsTaskbar />
        <ShowMePanel />
      </Screen>
    </>
  );
}
